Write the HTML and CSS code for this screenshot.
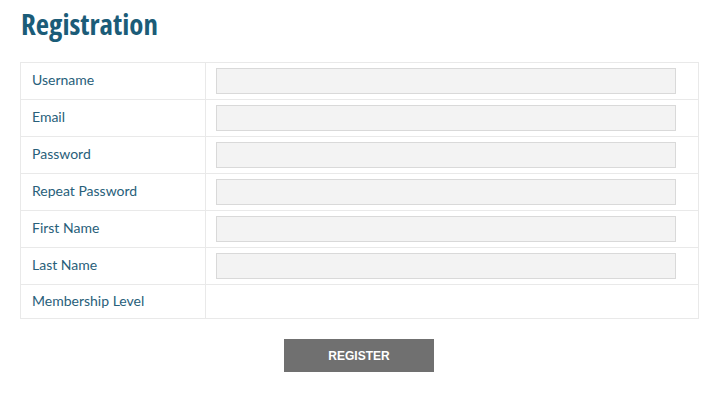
FILE: index.html
```html
<!DOCTYPE html>
<html>
<head>
<meta charset="utf-8">
<link rel="stylesheet" href="styles.css">
</head>
<body>
<div class="page">
  <h1 class="title">Registration</h1>
  <table class="form">
    <tr><td class="label">Username</td><td class="field"><input class="input" type="text"></td></tr>
    <tr><td class="label">Email</td><td class="field"><input class="input" type="text"></td></tr>
    <tr><td class="label">Password</td><td class="field"><input class="input" type="password"></td></tr>
    <tr><td class="label">Repeat Password</td><td class="field"><input class="input" type="password"></td></tr>
    <tr><td class="label">First Name</td><td class="field"><input class="input" type="text"></td></tr>
    <tr><td class="label">Last Name</td><td class="field"><input class="input" type="text"></td></tr>
    <tr class="last"><td class="label">Membership Level</td><td class="field"></td></tr>
  </table>
  <div class="actions">
    <button class="btn" type="button">REGISTER</button>
  </div>
</div>
</body>
</html>
```
FILE: styles.css
```css
html, body {
  margin: 0;
  padding: 0;
  background: #ffffff;
}
.page {
  padding: 0 17px 0 20px;
  font-family: Lato, "Open Sans", sans-serif;
}
.title {
  margin: 0;
  padding: 6px 0 0 1px;
  height: 62px;
  box-sizing: border-box;
  font-family: "Open Sans", sans-serif;
  font-stretch: 75%;
  font-weight: bold;
  font-size: 29px;
  line-height: 36px;
  color: #1b5c78;
}
.form {
  width: 679px;
  border-collapse: collapse;
  border: 1px solid #e9e9e9;
}
.form td {
  border: 1px solid #e9e9e9;
  height: 37px;
  padding: 0;
  box-sizing: border-box;
  vertical-align: middle;
}
.form .last td {
  height: 34px;
}
.label {
  width: 185px;
  padding: 0 0 4px 11px !important;
  font-size: 14px;
  color: #28607a;
}
.form .last .label {
  padding-bottom: 2px !important;
}
.field {
  padding-left: 10px !important;
}
.input {
  display: block;
  width: 460px;
  height: 26px;
  box-sizing: border-box;
  margin: 0;
  border: 1px solid #d9d9d9;
  background: #f3f3f3;
  padding: 0 6px;
  outline: none;
}
.actions {
  display: flex;
  justify-content: center;
  padding-top: 20px;
}
.btn {
  width: 150px;
  height: 33px;
  border: none;
  background: #707070;
  color: #ffffff;
  font-family: "Liberation Sans", Arial, sans-serif;
  font-weight: bold;
  font-size: 12px;
  cursor: pointer;
}
```
